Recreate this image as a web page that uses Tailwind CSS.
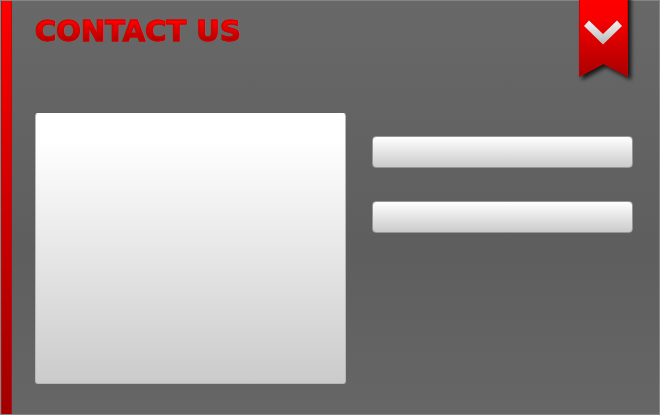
<!DOCTYPE html>
<html lang="en">
<head>
<meta charset="utf-8">
<meta name="viewport" content="width=device-width, initial-scale=1">
<title>Contact Us</title>
<script src="https://cdn.jsdelivr.net/npm/@tailwindcss/browser@4"></script>
</head>
<body class="font-['DejaVu_Sans','Liberation_Sans',sans-serif]">
<main class="relative flex min-h-screen border border-[#858585] bg-linear-to-b from-[#686868] via-[#5e5e5e] via-60% to-[#666666]">
  <div class="w-[11px] shrink-0 border-x border-[#b01010] bg-linear-to-b from-[#ff0000] to-[#a00000]"></div>
  <section class="flex min-w-0 flex-1 flex-col pr-[26px] pb-[30px] pl-[23px]">
    <header class="pt-3">
      <h1 class="w-fit bg-linear-to-b from-[#ff0000] from-25% to-[#b00000] to-80% bg-clip-text text-[29px] leading-9 font-bold text-transparent [-webkit-text-stroke:1px_#d00000]">CONTACT US</h1>
    </header>
    <form class="mt-16 grid flex-1 grid-cols-[311fr_261fr] gap-[26px]">
      <textarea aria-label="Message" class="block h-full min-h-[271px] w-full resize-none rounded-[3px] border border-[#b8b8b8] border-t-white bg-linear-to-b from-white from-10% to-[#cbcbcb] p-3 outline-none"></textarea>
      <div class="flex flex-col gap-[33px] pt-[23px]">
        <input type="text" aria-label="Name" class="h-8 w-full rounded-[4px] border border-[#969696] bg-linear-to-b from-white to-[#cbcbcb] px-3 outline-none">
        <input type="email" aria-label="Email" class="h-8 w-full rounded-[4px] border border-[#969696] bg-linear-to-b from-white to-[#cbcbcb] px-3 outline-none">
      </div>
    </form>
  </section>
  <button type="button" aria-label="Close panel" class="absolute -top-px right-6 h-[86px] w-[56px]">
    <svg class="block h-full w-full overflow-visible" viewBox="0 0 56 86" aria-hidden="true">
      <defs>
        <linearGradient id="red" x1="0" y1="0" x2="0" y2="1"><stop offset="0" stop-color="#ff0000"/><stop offset=".25" stop-color="#f80000"/><stop offset="1" stop-color="#a80000"/></linearGradient>
        <linearGradient id="silver" x1="0" y1="0" x2="0" y2="1"><stop offset="0" stop-color="#f4f4f4"/><stop offset="1" stop-color="#b8b8b8"/></linearGradient>
        <filter id="blur" x="-30%" y="-30%" width="160%" height="160%"><feGaussianBlur stdDeviation="2"/></filter>
        <clipPath id="edge"><rect x="-10" y="0" width="80" height="100"/></clipPath>
      </defs>
      <g clip-path="url(#edge)">
        <path d="M3-4H52V80L27 67 3 80Z" fill="#000" fill-opacity=".8" filter="url(#blur)"/>
      </g>
      <path d="M0 0H49V77L24.500 64 0 77Z" fill="url(#red)"/>
      <path d="M.5 0V76L24.500 63.500 48.500 76V0" fill="none" stroke="#c40000" stroke-opacity=".8"/>
      <path d="M5 26L10 20.500 24 34 38 20.500 43 26 24 44.500Z" fill="url(#silver)"/>
    </svg>
  </button>
</main>
</body>
</html>
